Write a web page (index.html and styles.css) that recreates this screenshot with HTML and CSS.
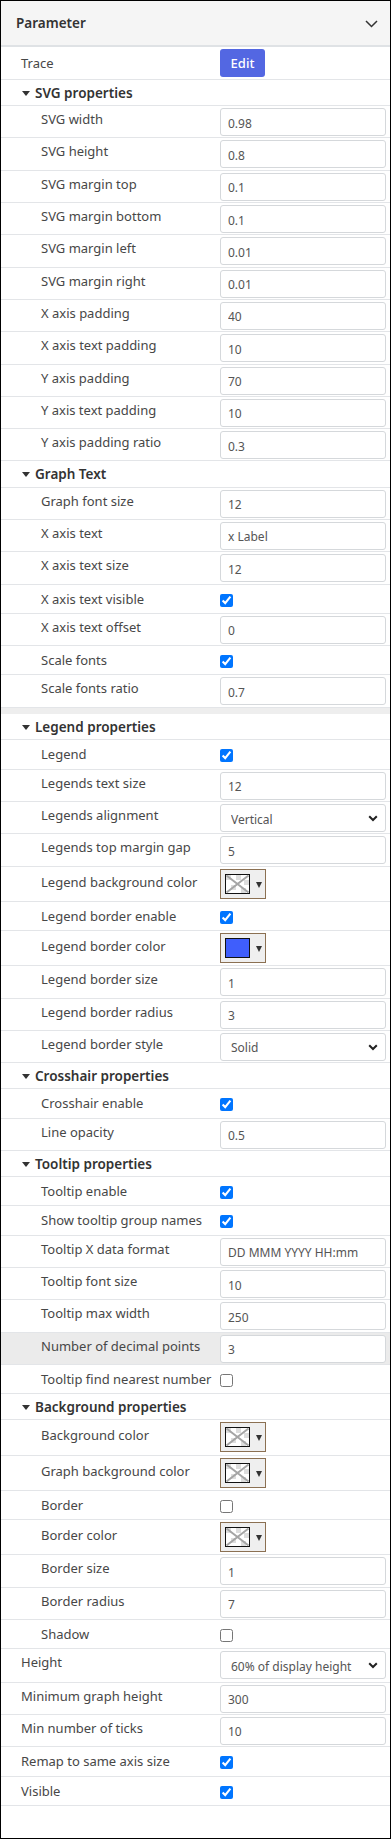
FILE: index.html
```html
<!DOCTYPE html>
<html>
<head>
<meta charset="utf-8">
<link rel="stylesheet" href="styles.css">
</head>
<body>
<div class="panel">
  <div class="panel-head">
    <span class="panel-title">Parameter</span>
    <svg class="head-chev" width="13" height="8" viewBox="0 0 13 8"><path d="M1 1 L6.5 6.5 L12 1" fill="none" stroke="#333" stroke-width="1.5"/></svg>
  </div>

  <div class="row r-trace"><div class="label top">Trace</div><div class="ctrl"><button class="btn">Edit</button></div></div>

  <div class="row sec"><span class="tri"></span><span class="sec-title">SVG properties</span></div>
  <div class="row r-in"><div class="label">SVG width</div><div class="ctrl"><input class="inp" value="0.98"></div></div>
  <div class="row r-in"><div class="label">SVG height</div><div class="ctrl"><input class="inp" value="0.8"></div></div>
  <div class="row r-in"><div class="label">SVG margin top</div><div class="ctrl"><input class="inp" value="0.1"></div></div>
  <div class="row r-in"><div class="label">SVG margin bottom</div><div class="ctrl"><input class="inp" value="0.1"></div></div>
  <div class="row r-in"><div class="label">SVG margin left</div><div class="ctrl"><input class="inp" value="0.01"></div></div>
  <div class="row r-in"><div class="label">SVG margin right</div><div class="ctrl"><input class="inp" value="0.01"></div></div>
  <div class="row r-in"><div class="label">X axis padding</div><div class="ctrl"><input class="inp" value="40"></div></div>
  <div class="row r-in"><div class="label">X axis text padding</div><div class="ctrl"><input class="inp" value="10"></div></div>
  <div class="row r-in"><div class="label">Y axis padding</div><div class="ctrl"><input class="inp" value="70"></div></div>
  <div class="row r-in"><div class="label">Y axis text padding</div><div class="ctrl"><input class="inp" value="10"></div></div>
  <div class="row r-in"><div class="label">Y axis padding ratio</div><div class="ctrl"><input class="inp" value="0.3"></div></div>

  <div class="row sec"><span class="tri"></span><span class="sec-title">Graph Text</span></div>
  <div class="row r-in"><div class="label">Graph font size</div><div class="ctrl"><input class="inp" value="12"></div></div>
  <div class="row r-in"><div class="label">X axis text</div><div class="ctrl"><input class="inp" value="x Label"></div></div>
  <div class="row r-in"><div class="label">X axis text size</div><div class="ctrl"><input class="inp" value="12"></div></div>
  <div class="row r-chk"><div class="label">X axis text visible</div><div class="ctrl"><input type="checkbox" class="chk" checked></div></div>
  <div class="row r-in"><div class="label">X axis text offset</div><div class="ctrl"><input class="inp" value="0"></div></div>
  <div class="row r-chk"><div class="label">Scale fonts</div><div class="ctrl"><input type="checkbox" class="chk" checked></div></div>
  <div class="row r-in"><div class="label">Scale fonts ratio</div><div class="ctrl"><input class="inp" value="0.7"></div></div>

  <div class="gap"></div>

  <div class="row sec"><span class="tri"></span><span class="sec-title">Legend properties</span></div>
  <div class="row r-chk"><div class="label">Legend</div><div class="ctrl"><input type="checkbox" class="chk" checked></div></div>
  <div class="row r-in"><div class="label">Legends text size</div><div class="ctrl"><input class="inp" value="12"></div></div>
  <div class="row r-in"><div class="label">Legends alignment</div><div class="ctrl"><div class="sel-wrap"><select class="sel"><option>Vertical</option></select><svg class="sel-chev" width="10" height="7" viewBox="0 0 10 7"><path d="M1.2 1.2 L5 5 L8.8 1.2" fill="none" stroke="#222" stroke-width="2"/></svg></div></div></div>
  <div class="row r-in"><div class="label">Legends top margin gap</div><div class="ctrl"><input class="inp" value="5"></div></div>
  <div class="row r-col"><div class="label">Legend background color</div><div class="ctrl"><div class="picker"><svg class="sw" width="25" height="20" viewBox="0 0 25 20"><rect x="0.5" y="0.5" width="24" height="19" fill="#fff" stroke="#111"/><rect x="1" y="1" width="5" height="5" fill="#ddd"/><rect x="11" y="1" width="5" height="5" fill="#ddd"/><rect x="19" y="6" width="5" height="5" fill="#ddd"/><rect x="6" y="11" width="5" height="5" fill="#ddd"/><rect x="16" y="14" width="5" height="5" fill="#ddd"/><path d="M1.5 1.5 L23.5 18.5 M23.5 1.5 L1.5 18.5" stroke="#a5a5a5" stroke-width="2"/></svg><span class="arr"></span></div></div></div>
  <div class="row r-chk"><div class="label">Legend border enable</div><div class="ctrl"><input type="checkbox" class="chk" checked></div></div>
  <div class="row r-col"><div class="label">Legend border color</div><div class="ctrl"><div class="picker"><span class="sw-blue"></span><span class="arr"></span></div></div></div>
  <div class="row r-in"><div class="label">Legend border size</div><div class="ctrl"><input class="inp" value="1"></div></div>
  <div class="row r-in"><div class="label">Legend border radius</div><div class="ctrl"><input class="inp" value="3"></div></div>
  <div class="row r-in"><div class="label">Legend border style</div><div class="ctrl"><div class="sel-wrap"><select class="sel"><option>Solid</option></select><svg class="sel-chev" width="10" height="7" viewBox="0 0 10 7"><path d="M1.2 1.2 L5 5 L8.8 1.2" fill="none" stroke="#222" stroke-width="2"/></svg></div></div></div>

  <div class="row sec"><span class="tri"></span><span class="sec-title">Crosshair properties</span></div>
  <div class="row r-chk"><div class="label">Crosshair enable</div><div class="ctrl"><input type="checkbox" class="chk" checked></div></div>
  <div class="row r-in"><div class="label">Line opacity</div><div class="ctrl"><input class="inp" value="0.5"></div></div>

  <div class="row sec"><span class="tri"></span><span class="sec-title">Tooltip properties</span></div>
  <div class="row r-chk"><div class="label">Tooltip enable</div><div class="ctrl"><input type="checkbox" class="chk" checked></div></div>
  <div class="row r-chk"><div class="label">Show tooltip group names</div><div class="ctrl"><input type="checkbox" class="chk" checked></div></div>
  <div class="row r-in"><div class="label">Tooltip X data format</div><div class="ctrl"><input class="inp" value="DD MMM YYYY HH:mm"></div></div>
  <div class="row r-in"><div class="label">Tooltip font size</div><div class="ctrl"><input class="inp" value="10"></div></div>
  <div class="row r-in"><div class="label">Tooltip max width</div><div class="ctrl"><input class="inp" value="250"></div></div>
  <div class="row r-in hover"><div class="label">Number of decimal points</div><div class="ctrl"><input class="inp" value="3"></div></div>
  <div class="row r-chk"><div class="label">Tooltip find nearest number</div><div class="ctrl"><input type="checkbox" class="chk"></div></div>

  <div class="row sec"><span class="tri"></span><span class="sec-title">Background properties</span></div>
  <div class="row r-col"><div class="label">Background color</div><div class="ctrl"><div class="picker"><svg class="sw" width="25" height="20" viewBox="0 0 25 20"><rect x="0.5" y="0.5" width="24" height="19" fill="#fff" stroke="#111"/><rect x="1" y="1" width="5" height="5" fill="#ddd"/><rect x="11" y="1" width="5" height="5" fill="#ddd"/><rect x="19" y="6" width="5" height="5" fill="#ddd"/><rect x="6" y="11" width="5" height="5" fill="#ddd"/><rect x="16" y="14" width="5" height="5" fill="#ddd"/><path d="M1.5 1.5 L23.5 18.5 M23.5 1.5 L1.5 18.5" stroke="#a5a5a5" stroke-width="2"/></svg><span class="arr"></span></div></div></div>
  <div class="row r-col"><div class="label">Graph background color</div><div class="ctrl"><div class="picker"><svg class="sw" width="25" height="20" viewBox="0 0 25 20"><rect x="0.5" y="0.5" width="24" height="19" fill="#fff" stroke="#111"/><rect x="1" y="1" width="5" height="5" fill="#ddd"/><rect x="11" y="1" width="5" height="5" fill="#ddd"/><rect x="19" y="6" width="5" height="5" fill="#ddd"/><rect x="6" y="11" width="5" height="5" fill="#ddd"/><rect x="16" y="14" width="5" height="5" fill="#ddd"/><path d="M1.5 1.5 L23.5 18.5 M23.5 1.5 L1.5 18.5" stroke="#a5a5a5" stroke-width="2"/></svg><span class="arr"></span></div></div></div>
  <div class="row r-chk"><div class="label">Border</div><div class="ctrl"><input type="checkbox" class="chk"></div></div>
  <div class="row r-col"><div class="label">Border color</div><div class="ctrl"><div class="picker"><svg class="sw" width="25" height="20" viewBox="0 0 25 20"><rect x="0.5" y="0.5" width="24" height="19" fill="#fff" stroke="#111"/><rect x="1" y="1" width="5" height="5" fill="#ddd"/><rect x="11" y="1" width="5" height="5" fill="#ddd"/><rect x="19" y="6" width="5" height="5" fill="#ddd"/><rect x="6" y="11" width="5" height="5" fill="#ddd"/><rect x="16" y="14" width="5" height="5" fill="#ddd"/><path d="M1.5 1.5 L23.5 18.5 M23.5 1.5 L1.5 18.5" stroke="#a5a5a5" stroke-width="2"/></svg><span class="arr"></span></div></div></div>
  <div class="row r-in"><div class="label">Border size</div><div class="ctrl"><input class="inp" value="1"></div></div>
  <div class="row r-in"><div class="label">Border radius</div><div class="ctrl"><input class="inp" value="7"></div></div>
  <div class="row r-chk"><div class="label">Shadow</div><div class="ctrl"><input type="checkbox" class="chk"></div></div>

  <div class="row r-in r-tall"><div class="label top">Height</div><div class="ctrl"><div class="sel-wrap"><select class="sel"><option>60% of display height</option></select><svg class="sel-chev" width="10" height="7" viewBox="0 0 10 7"><path d="M1.2 1.2 L5 5 L8.8 1.2" fill="none" stroke="#222" stroke-width="2"/></svg></div></div></div>
  <div class="row r-in"><div class="label top">Minimum graph height</div><div class="ctrl"><input class="inp" value="300"></div></div>
  <div class="row r-in"><div class="label top">Min number of ticks</div><div class="ctrl"><input class="inp" value="10"></div></div>
  <div class="row r-chk"><div class="label top">Remap to same axis size</div><div class="ctrl"><input type="checkbox" class="chk" checked></div></div>
  <div class="row r-chk"><div class="label top">Visible</div><div class="ctrl"><input type="checkbox" class="chk" checked></div></div>
</div>
</body>
</html>
```

FILE: styles.css
```css
* { box-sizing: border-box; }
html, body { margin: 0; padding: 0; background: #fff; }
body {
  font-family: "Noto Sans", "Open Sans", sans-serif;
  font-size: 13px;
  color: #474747;
}
.panel {
  border: 1px solid #000;
  min-height: 100vh;
  background: #fff;
}
.panel-head {
  height: 46px;
  background: #f5f5f5;
  border-bottom: 2px solid #dfe2e5;
  display: flex;
  align-items: center;
  justify-content: space-between;
  padding: 0 12px 0 15px;
}
.panel-title {
  font-size: 13.5px;
  font-weight: 600;
  color: #333;
  margin-top: -1px;
}
.head-chev { margin-top: 1px; }
.row {
  display: flex;
  align-items: flex-start;
  border-bottom: 1px solid #e3e5e8;
}
.label {
  flex: 0 0 219px;
  padding-left: 40px;
  line-height: 18px;
  white-space: nowrap;
}
.label.top { padding-left: 20px; }
.ctrl {
  flex: 1;
  padding-right: 4px;
  display: flex;
}
.r-trace { height: 33px; }
.r-trace .label { padding-top: 7px; }
.r-trace .ctrl { padding-top: 2px; }
.btn {
  width: 45px;
  height: 28px;
  border: none;
  border-radius: 3px;
  background: #5367e2;
  color: #fff;
  font-family: inherit;
  font-size: 13px;
  font-weight: 500;
  padding: 0;
}
.sec {
  height: 26.2px;
  align-items: center;
  padding-left: 21px;
}
.tri {
  width: 0;
  height: 0;
  border-left: 4px solid transparent;
  border-right: 4px solid transparent;
  border-top: 5px solid #333;
  margin-right: 5px;
  margin-top: 1px;
}
.sec-title {
  font-weight: 600;
  font-size: 13.5px;
  color: #333;
}
.gap {
  height: 6.5px;
  background: #eeeeee;
}
.r-in { height: 32.3px; }
.r-in .label { padding-top: 4px; }
.r-in .ctrl { padding-top: 2px; }
.r-tall { height: 33.5px; }
.hover { background: #ebebeb; }
.inp {
  width: 100%;
  height: 28px;
  border: 1px solid #d5d8db;
  border-radius: 3px;
  padding: 2px 7px 0;
  font-family: inherit;
  font-size: 12px;
  color: #555;
  background: #fff;
  outline: none;
}
.sel-wrap {
  position: relative;
  width: 100%;
}
.sel {
  width: 100%;
  height: 28px;
  border: 1px solid #d5d8db;
  border-radius: 3px;
  padding: 2px 10px 0;
  font-family: inherit;
  font-size: 12px;
  color: #555;
  background: #fff;
  -webkit-appearance: none;
  appearance: none;
  outline: none;
}
.sel-chev {
  position: absolute;
  right: 8px;
  top: 11px;
}
.r-chk { height: 29.3px; }
.r-chk .label { padding-top: 5px; }
.r-chk .ctrl { padding-top: 9px; }
.chk {
  margin: 0;
  width: 13px;
  height: 13px;
  accent-color: #0075ff;
}
.r-col { height: 35.2px; }
.r-col .label { padding-top: 6px; }
.r-col .ctrl { padding-top: 2px; }
.picker {
  width: 46px;
  height: 30px;
  border: 1px solid #8b7052;
  background: #efefef;
  display: flex;
  align-items: center;
  padding-left: 4px;
}
.sw { display: block; }
.sw-blue {
  width: 25px;
  height: 20px;
  background: #3f5efc;
  border: 1px solid #111;
}
.arr {
  width: 0;
  height: 0;
  border-left: 3px solid transparent;
  border-right: 3px solid transparent;
  border-top: 6px solid #333;
  margin-left: 6px;
  margin-top: 2px;
}
```
